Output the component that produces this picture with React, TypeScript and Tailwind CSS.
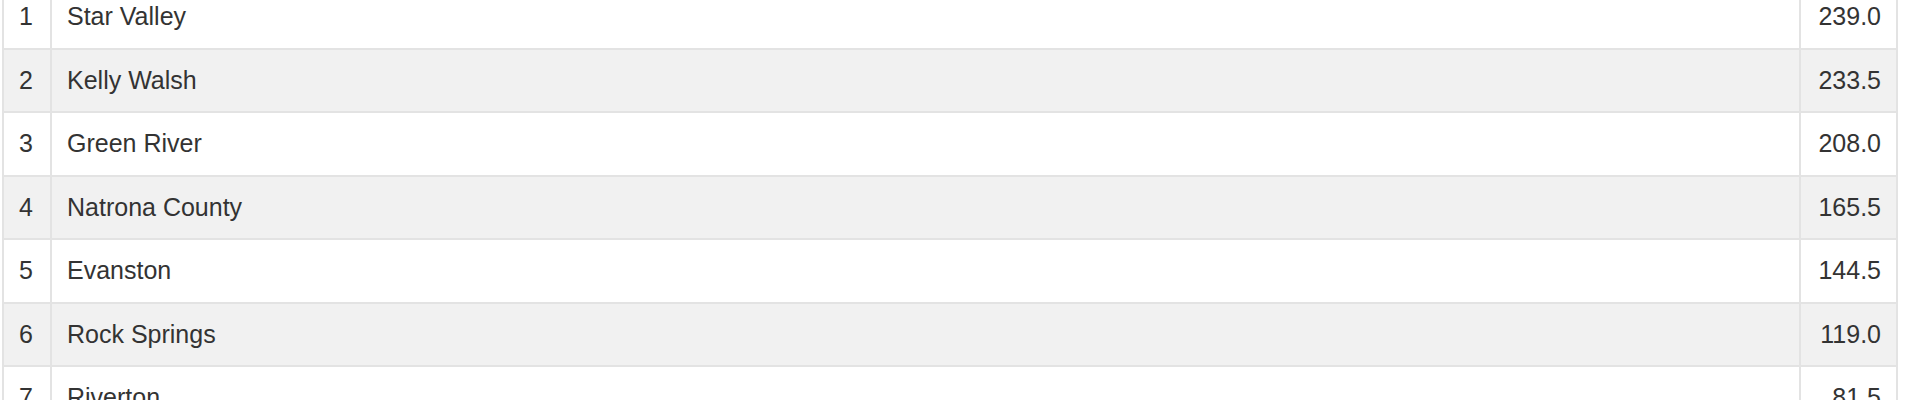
const rows = [
  { rank: 1, team: "Star Valley", points: "239.0" },
  { rank: 2, team: "Kelly Walsh", points: "233.5" },
  { rank: 3, team: "Green River", points: "208.0" },
  { rank: 4, team: "Natrona County", points: "165.5" },
  { rank: 5, team: "Evanston", points: "144.5" },
  { rank: 6, team: "Rock Springs", points: "119.0" },
  { rank: 7, team: "Riverton", points: "81.5" },
]

export default function App() {
  return (
    <div className="h-[400px] w-full overflow-hidden bg-white font-['Liberation_Sans',Arial,sans-serif] text-[25px] text-[#333333]">
      <table className="-mt-[16px] ml-[2px] w-[1896px] border-collapse">
        <tbody>
          {rows.map((r, i) => (
            <tr key={r.rank} className={i % 2 === 1 ? "bg-[#f1f1f1]" : "bg-white"}>
              <td className="h-[63.5px] w-[48px] border-2 border-[#e3e3e3] px-[15px] text-left">{r.rank}</td>
              <td className="h-[63.5px] border-2 border-[#e3e3e3] px-[15px] text-left">{r.team}</td>
              <td className="h-[63.5px] w-[97px] border-2 border-[#e3e3e3] px-[15px] text-right">{r.points}</td>
            </tr>
          ))}
        </tbody>
      </table>
    </div>
  )
}
